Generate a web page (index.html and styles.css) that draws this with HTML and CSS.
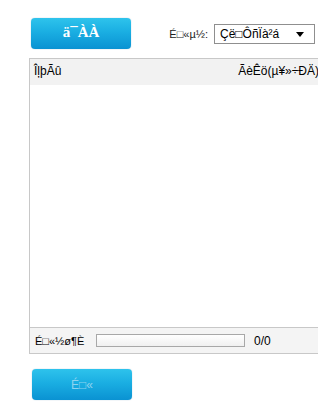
FILE: index.html
```html
<!DOCTYPE html>
<html>
<head>
<meta charset="utf-8">
<link rel="stylesheet" href="styles.css">
</head>
<body>
<div class="page">
  <div class="toolbar">
    <div class="btn btn-browse">ä¯ÀÀ</div>
    <div class="target">
      <span class="target-label">É□«µ½:</span>
      <div class="select">
        <span class="select-text">Çë□ÔñÏà²á</span>
        <span class="select-arrow"></span>
      </div>
    </div>
  </div>
  <div class="panel">
    <div class="panel-head">
      <span class="col-name">ÎļþÃû</span>
      <span class="col-desc">ÃèÊö(µ¥»÷ÐÄ)</span>
    </div>
    <div class="panel-body"></div>
    <div class="panel-foot">
      <span class="foot-label">É□«½ø¶È</span>
      <div class="progress"></div>
      <span class="count">0/0</span>
    </div>
  </div>
  <div class="btn btn-upload">É□«</div>
</div>
</body>
</html>
```

FILE: styles.css
```css
html, body {
  margin: 0;
  padding: 0;
  background: #ffffff;
  overflow: hidden;
}
.page {
  width: 318px;
  height: 420px;
  font-family: "Liberation Sans", Arial, sans-serif;
  font-size: 12px;
  color: #000;
  overflow: hidden;
}
.toolbar {
  display: flex;
  align-items: flex-start;
  justify-content: space-between;
  padding: 18px 3px 0 31px;
  height: 40px;
}
.btn {
  width: 100px;
  height: 31px;
  border-radius: 4px;
  background: linear-gradient(to bottom, #2ec3ec 0%, #1aaee2 45%, #0a92d2 100%);
  box-shadow: 0 0 1px rgba(0, 90, 150, 0.5);
  display: flex;
  align-items: center;
  justify-content: center;
  box-sizing: border-box;
}
.btn-browse {
  color: #ffffff;
  font-family: "Liberation Serif", "Times New Roman", serif;
  font-weight: bold;
  font-size: 15px;
  padding-bottom: 2px;
}
.target {
  display: flex;
  align-items: center;
  gap: 6px;
  margin-top: 6px;
}
.target-label {
  font-size: 11px;
  color: #222;
}
.select {
  width: 101px;
  height: 20px;
  box-sizing: border-box;
  border: 1px solid #8f8f8f;
  background: #fff;
  display: flex;
  align-items: center;
  justify-content: space-between;
  padding: 0 10px 0 5px;
}
.select-text {
  font-size: 12px;
}
.select-arrow {
  width: 0;
  height: 0;
  border-left: 4px solid transparent;
  border-right: 4px solid transparent;
  border-top: 5px solid #000;
}
.panel {
  margin-left: 29px;
  width: 300px;
  border: 1px solid #c8c8c8;
  border-right: none;
}
.panel-head {
  height: 26px;
  background: #f2f2f2;
  display: flex;
  align-items: center;
  justify-content: space-between;
  padding: 0 0 2px 4px;
  box-sizing: border-box;
}
.col-desc {
  margin-right: 11px;
}
.panel-body {
  height: 242px;
  background: #fff;
}
.panel-foot {
  height: 25px;
  border-top: 1px solid #c8c8c8;
  background: #f4f4f4;
  display: flex;
  align-items: center;
  padding-left: 5px;
  font-size: 11px;
}
.foot-label {
  width: 60px;
}
.progress {
  width: 149px;
  height: 13px;
  box-sizing: border-box;
  border: 1px solid #a8a8a8;
  background: linear-gradient(to bottom, #ffffff, #f0f0f0);
  margin-left: 1px;
}
.count {
  margin-left: 9px;
  font-size: 12px;
}
.btn-upload {
  margin: 15px 0 0 32px;
  color: #8fd3ef;
  font-size: 12px;
}
```
